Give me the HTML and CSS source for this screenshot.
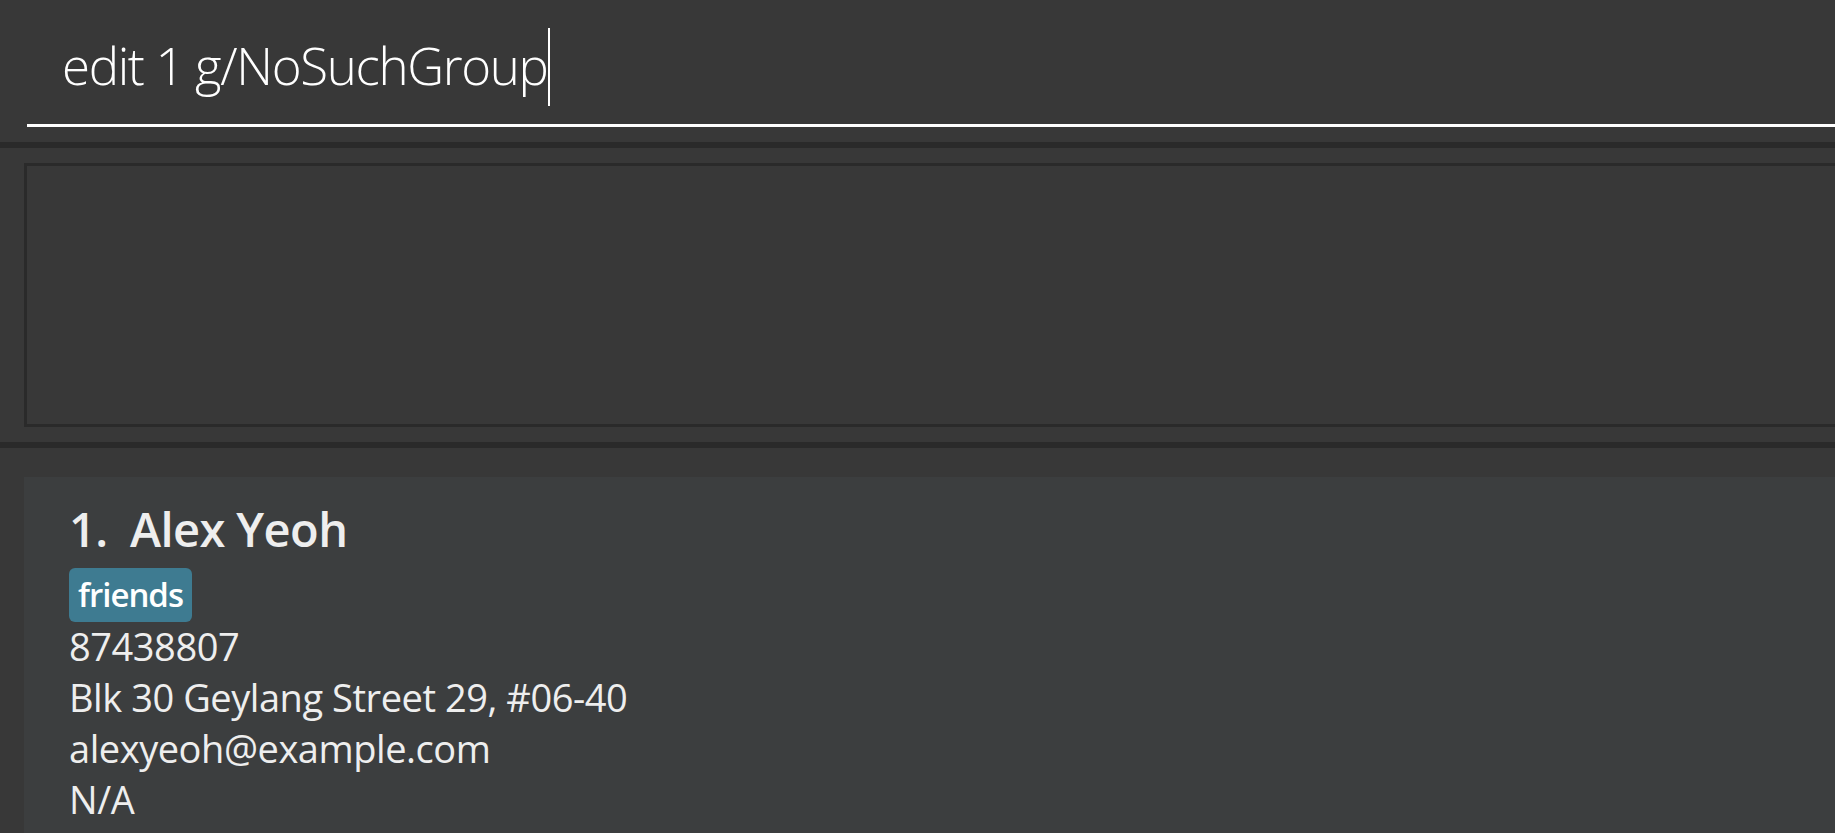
FILE: index.html
```html
<!DOCTYPE html>
<html lang="en">
<head>
<meta charset="utf-8">
<title>Address Book</title>
<link rel="stylesheet" href="styles.css">
</head>
<body>
<div class="app">
  <div class="command-section">
    <div class="command-field">
      <span class="command-text">edit 1 g/NoSuchGroup</span><span class="caret"></span>
    </div>
  </div>
  <div class="divider"></div>
  <div class="result-section">
    <div class="result-display"></div>
  </div>
  <div class="divider"></div>
  <div class="list-section">
    <div class="person-card">
      <div class="name-row">
        <span class="person-id">1.</span>
        <span class="person-name">Alex Yeoh</span>
      </div>
      <div class="tags"><span class="tag">friends</span></div>
      <div class="field">87438807</div>
      <div class="field">Blk 30 Geylang Street 29, #06-40</div>
      <div class="field">alexyeoh@example.com</div>
      <div class="field">N/A</div>
    </div>
  </div>
</div>
</body>
</html>
```
FILE: styles.css
```css
html, body {
  margin: 0;
  padding: 0;
  height: 100%;
  overflow: hidden;
  background: #383838;
}

.app {
  display: flex;
  flex-direction: column;
  height: 100vh;
  background: #383838;
  font-family: "Open Sans", "Noto Sans", sans-serif;
  color: #eeeeee;
}

.command-section {
  padding: 0 0 15px 27px;
}

.command-field {
  box-sizing: border-box;
  height: 127px;
  border-bottom: 3px solid #ffffff;
  padding-left: 35px;
  display: flex;
  align-items: flex-start;
}

.command-text {
  margin-top: 40px;
  font-family: "Open Sans", "Noto Sans", sans-serif;
  font-weight: 300;
  font-size: 51px;
  line-height: 51px;
  letter-spacing: -1.35px;
  color: #ffffff;
  white-space: pre;
}

.caret {
  margin-top: 28px;
  margin-left: 0;
  width: 2px;
  height: 78px;
  background: #ffffff;
}

.divider {
  height: 6px;
  background: #2a2a2a;
  flex: none;
}

.result-section {
  padding: 15px 0 15px 24px;
}

.result-display {
  box-sizing: border-box;
  height: 264px;
  border: 3px solid #2a2a2a;
  border-right: none;
  background: #383838;
}

.list-section {
  flex: 1;
  padding: 29px 0 0 24px;
  display: flex;
  flex-direction: column;
}

.person-card {
  flex: 1;
  background: #3c3e3f;
  padding: 20px 0 0 45px;
}

.name-row {
  display: flex;
  font-weight: 600;
  font-size: 47px;
  line-height: 64px;
  letter-spacing: -0.6px;
  color: #eeeeee;
}

.person-id {
  flex: none;
  width: 61px;
}

.tags {
  display: flex;
  margin-top: 7px;
}

.tag {
  height: 54px;
  line-height: 54px;
  padding: 0 9px;
  background: #3e7b91;
  border-radius: 6px;
  font-size: 33px;
  font-weight: 600;
  letter-spacing: -1px;
  color: #ffffff;
}

.field {
  font-size: 38px;
  line-height: 51px;
  letter-spacing: -0.45px;
  color: #eeeeee;
  white-space: nowrap;
}

.tags + .field {
  margin-top: -1px;
}
```
